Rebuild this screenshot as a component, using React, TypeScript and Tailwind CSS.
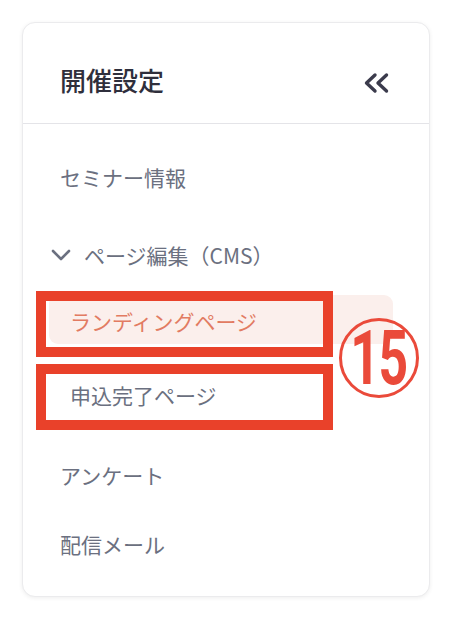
import React from 'react';

const font = { fontFamily: '"Noto Sans CJK JP", "Noto Sans", sans-serif' };

function NavRow({ children, className = '' }: { children: React.ReactNode; className?: string }) {
  return (
    <div className={`flex items-center pl-[37px] text-[21px] leading-none text-[#6b7080] ${className}`}>
      {children}
    </div>
  );
}

export default function App() {
  return (
    <div className="relative w-[452px] h-[630px] bg-white" style={font}>
      <div className="absolute left-[22px] top-[22px] w-[408px] h-[575px] rounded-[13px] border border-[#ebebed] bg-white shadow-[0_1px_4px_rgba(0,0,0,0.07)] flex flex-col">
        {/* header */}
        <div className="h-[101px] pt-[14px] pl-[37px] pr-[40px] flex items-center justify-between border-b border-[#e4e4e8]">
          <h2 className="text-[26px] leading-none font-medium text-[#2f2f3c]">開催設定</h2>
          <svg width="27" height="22" viewBox="0 0 27 22" className="mt-[5px]" fill="none" stroke="#3b3b4c" strokeWidth="3.4" strokeLinecap="round" strokeLinejoin="round">
            <path d="M13 3 L4.5 11 L13 19" />
            <path d="M24.5 3 L16 11 L24.5 19" />
          </svg>
        </div>

        {/* nav */}
        <div className="flex flex-col pt-[20px]">
          <NavRow className="h-[66px]">セミナー情報</NavRow>
          <div className="mt-[12px] h-[66px] flex items-center pl-[28px] text-[21px] leading-none text-[#6b7080]">
            <svg width="20" height="12" viewBox="0 0 20 12" fill="none" stroke="#6b7080" strokeWidth="2.6" strokeLinecap="round" strokeLinejoin="round">
              <path d="M2 2 L10 10 L18 2" />
            </svg>
            <span className="ml-[13px]">ページ編集（CMS）</span>
          </div>
          <div className="mt-[7px] ml-[26px] mr-[36px] h-[49px] rounded-[9px] bg-[#fbefec] flex items-center pl-[21px] pt-[3px] text-[21px] leading-none text-[#e27b62]">
            ランディングページ
          </div>
          <div className="mt-[27px] ml-[26px] mr-[36px] h-[49px] flex items-center pl-[21px] text-[21px] leading-none text-[#6b7080]">
            申込完了ページ
          </div>
          <NavRow className="mt-[22px] h-[66px]">アンケート</NavRow>
          <NavRow className="mt-[3px] h-[66px]">配信メール</NavRow>
        </div>
      </div>

      {/* annotations */}
      <div className="absolute left-[36px] top-[291px] w-[297px] h-[66px] border-[10px] border-[#e9412a]" />
      <div className="absolute left-[36px] top-[364px] w-[297px] h-[66px] border-[10px] border-[#e9412a]" />
      <div className="absolute left-[339px] top-[318px] w-[80px] h-[80px] rounded-full border-[3px] border-[#ea4a3a] flex items-center justify-center">
        <span
          className="text-[76px] leading-none font-bold text-[#ea4a3a] scale-x-[0.68] tracking-[-2px]"
          style={{ fontFamily: 'Roboto, "Liberation Sans", sans-serif' }}
        >
          15
        </span>
      </div>
    </div>
  );
}
